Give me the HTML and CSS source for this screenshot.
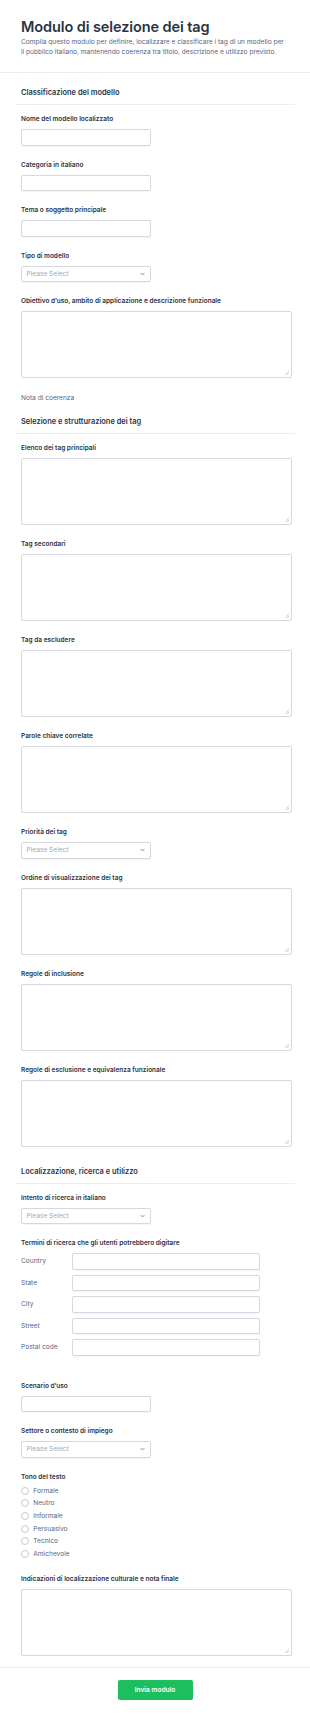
FILE: index.html
```html
<!DOCTYPE html>
<html lang="it">
<head>
<meta charset="utf-8">
<title>Modulo di selezione dei tag</title>
<link rel="stylesheet" href="styles.css">
</head>
<body>
<header class="header">
  <h1 class="title">Modulo di selezione dei tag</h1>
  <p class="desc">Compila questo modulo per definire, localizzare e classificare i tag di un modello per<br>il pubblico italiano, mantenendo coerenza tra titolo, descrizione e utilizzo previsto.</p>
</header>
<form class="form">
  <section class="section">
    <h2 class="section-title section-title-first">Classificazione del modello</h2>
    <div class="field"><label class="label">Nome del modello localizzato</label><input class="input" type="text"></div>
    <div class="field"><label class="label">Categoria in italiano</label><input class="input" type="text"></div>
    <div class="field"><label class="label">Tema o soggetto principale</label><input class="input" type="text"></div>
    <div class="field"><label class="label">Tipo di modello</label>
      <div class="select"><span>Please Select</span><svg class="chev" viewBox="0 0 8 5" width="5" height="4"><path d="M1 1l3 3 3-3" fill="none" stroke="#6f7787" stroke-width="1.4"/></svg></div>
    </div>
    <div class="field"><label class="label">Obiettivo d’uso, ambito di applicazione e descrizione funzionale</label><textarea class="textarea"></textarea></div>
    <p class="note">Nota di coerenza</p>
  </section>
  <section class="section">
    <h2 class="section-title">Selezione e strutturazione dei tag</h2>
    <div class="field"><label class="label">Elenco dei tag principali</label><textarea class="textarea"></textarea></div>
    <div class="field"><label class="label">Tag secondari</label><textarea class="textarea"></textarea></div>
    <div class="field"><label class="label">Tag da escludere</label><textarea class="textarea"></textarea></div>
    <div class="field"><label class="label">Parole chiave correlate</label><textarea class="textarea"></textarea></div>
    <div class="field"><label class="label">Priorità dei tag</label>
      <div class="select"><span>Please Select</span><svg class="chev" viewBox="0 0 8 5" width="5" height="4"><path d="M1 1l3 3 3-3" fill="none" stroke="#6f7787" stroke-width="1.4"/></svg></div>
    </div>
    <div class="field"><label class="label">Ordine di visualizzazione dei tag</label><textarea class="textarea"></textarea></div>
    <div class="field"><label class="label">Regole di inclusione</label><textarea class="textarea"></textarea></div>
    <div class="field"><label class="label">Regole di esclusione e equivalenza funzionale</label><textarea class="textarea"></textarea></div>
  </section>
  <section class="section">
    <h2 class="section-title">Localizzazione, ricerca e utilizzo</h2>
    <div class="field"><label class="label">Intento di ricerca in italiano</label>
      <div class="select"><span>Please Select</span><svg class="chev" viewBox="0 0 8 5" width="5" height="4"><path d="M1 1l3 3 3-3" fill="none" stroke="#6f7787" stroke-width="1.4"/></svg></div>
    </div>
    <div class="field field-address"><label class="label">Termini di ricerca che gli utenti potrebbero digitare</label>
      <div class="addr-grid">
        <span class="addr-label">Country</span><input class="input addr-input" type="text">
        <span class="addr-label">State</span><input class="input addr-input" type="text">
        <span class="addr-label">City</span><input class="input addr-input" type="text">
        <span class="addr-label">Street</span><input class="input addr-input" type="text">
        <span class="addr-label">Postal code</span><input class="input addr-input" type="text">
      </div>
    </div>
    <div class="field"><label class="label">Scenario d’uso</label><input class="input" type="text"></div>
    <div class="field"><label class="label">Settore o contesto di impiego</label>
      <div class="select"><span>Please Select</span><svg class="chev" viewBox="0 0 8 5" width="5" height="4"><path d="M1 1l3 3 3-3" fill="none" stroke="#6f7787" stroke-width="1.4"/></svg></div>
    </div>
    <div class="field"><label class="label">Tono del testo</label>
      <ul class="radios">
        <li class="radio"><span class="circle"></span>Formale</li>
        <li class="radio"><span class="circle"></span>Neutro</li>
        <li class="radio"><span class="circle"></span>Informale</li>
        <li class="radio"><span class="circle"></span>Persuasivo</li>
        <li class="radio"><span class="circle"></span>Tecnico</li>
        <li class="radio"><span class="circle"></span>Amichevole</li>
      </ul>
    </div>
    <div class="field field-last"><label class="label">Indicazioni di localizzazione culturale e nota finale</label><textarea class="textarea"></textarea></div>
  </section>
  <div class="actions"><button class="submit" type="button">Invia modulo</button></div>
</form>
</body>
</html>
```
FILE: styles.css
```css
* { box-sizing: border-box; }
html, body { margin: 0; padding: 0; background: #fff; }
body { font-family: Inter, "Noto Sans", sans-serif; color: #2c3345; width: 310px; }

.header { padding: 18px 21px 15px; border-bottom: 1px solid #eceef3; }
.title { margin: 0; font-size: 14.5px; line-height: 17px; font-weight: 600; letter-spacing: -0.1px; color: #2c3345; }
.desc { margin: 2px 0 0; font-size: 6.6px; line-height: 10px; color: #57647e; white-space: nowrap; }

.form { padding: 0 15px; }
.section-title { margin: 0; padding: 14px 6px 6px; font-size: 7.45px; line-height: 10px; font-weight: 600; color: #2c3345; border-bottom: 1px solid #eceef3; }
.section-title-first { padding-top: 15px; }

.field { padding: 9px 6px 6px; }
.section-title + .field { padding-top: 10px; }
.label { display: block; font-size: 6.5px; line-height: 8px; font-weight: 600; color: #2c3345; margin-bottom: 6px; }

.input { display: block; width: 130px; height: 16.5px; border: 1px solid #d5d8e1; border-radius: 2px; background: #fff; padding: 0 4px; font: inherit; font-size: 6.6px; box-shadow: 0 0.5px 1px rgba(0,0,0,0.04); outline: none; }
.select { width: 130px; height: 16.5px; border: 1px solid #d5d8e1; border-radius: 2px; display: flex; align-items: center; justify-content: space-between; padding: 0 5px 0 4.5px; font-size: 6.6px; color: #a3a9b7; box-shadow: 0 0.5px 1px rgba(0,0,0,0.04); }
.chev { display: block; }
.textarea {
  display: block; width: 271px; height: 67px; margin: 0; padding: 3px;
  border: 1px solid #d5d8e1; border-radius: 2px; font: inherit; outline: none; resize: none;
  background: #fff linear-gradient(135deg, transparent 0 48%, #c9cdd6 48% 58%, transparent 58% 74%, #c9cdd6 74% 84%, transparent 84%) no-repeat right 2px bottom 2px / 4px 4px;
}

.note { margin: 0; padding: 9px 6px 0; font-size: 6.6px; line-height: 10px; color: #57647e; }

.addr-grid { display: grid; grid-template-columns: 50.5px 188px; row-gap: 5px; align-items: center; }
.addr-label { font-size: 6.6px; color: #57647e; }
.addr-input { width: 188px; }
.field-address { padding-bottom: 17px; }

.radios { list-style: none; margin: -1px 0 0; padding: 0; display: flex; flex-direction: column; gap: 2.7px; }
.radio { display: flex; align-items: center; height: 10px; font-size: 6.6px; color: #57647e; }
.circle { width: 8px; height: 8px; border: 1px solid #c3c9d6; border-radius: 50%; margin-right: 4.3px; flex: none; }
.field-last { padding-top: 10px; }

.actions { display: flex; justify-content: center; margin: 5px -15px 0; padding: 12px 0 16px; border-top: 1px solid #eceef3; }
.submit { width: 75px; height: 20px; border: 0; border-radius: 2px; background: #1dbe5d; color: #fff; font: inherit; font-size: 6.6px; font-weight: 600; cursor: pointer; }
```
